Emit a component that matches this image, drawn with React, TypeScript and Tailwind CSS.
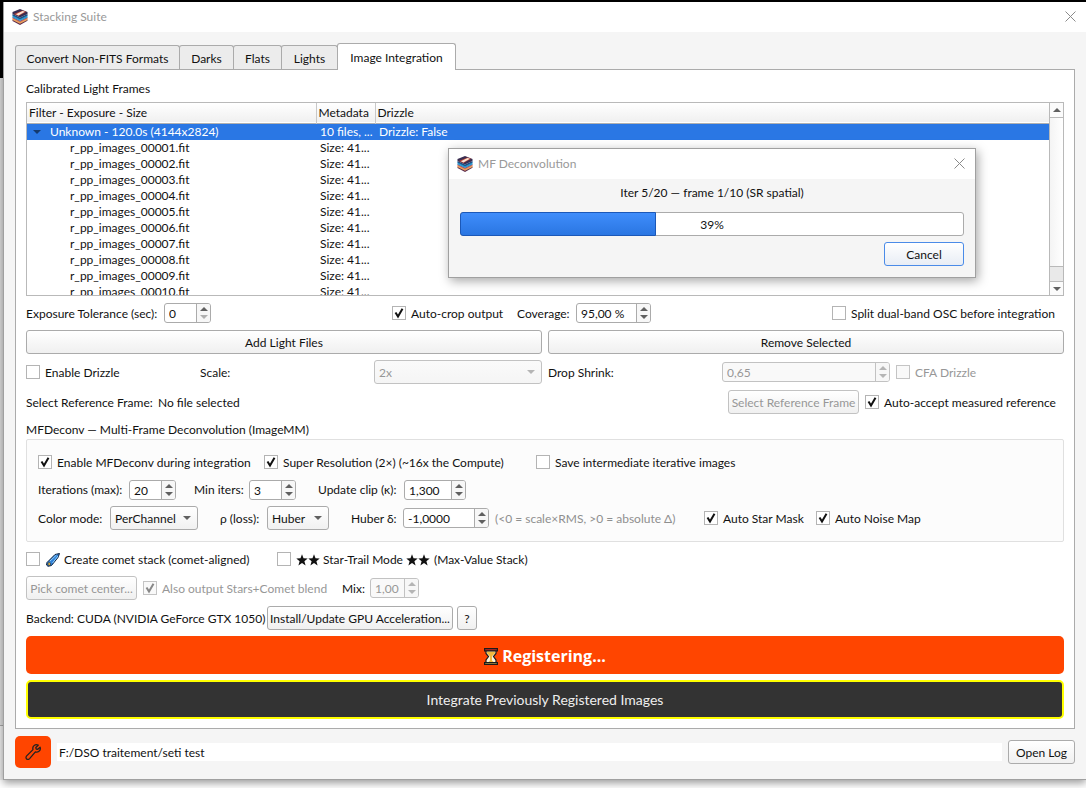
import { useState, type ReactNode } from 'react'
import clsx from 'clsx'

const TABS = ['Convert Non-FITS Formats', 'Darks', 'Flats', 'Lights', 'Image Integration']
const TAB_WIDTHS = ['w-[165px]', 'w-[55px]', 'w-[49px]', 'w-[57px]', 'w-[119px]']

const FRAMES = Array.from({ length: 10 }, (_, i) => `r_pp_images_${String(i + 1).padStart(5, '0')}.fit`)

function Logo() {
  return (
    <svg viewBox="0 0 16 16" className="size-4 shrink-0" aria-hidden="true">
      <path d="M0.5 10.5 8 14l7.5-3.5v1.2L8 16 0.5 12z" fill="#5a2a4e" />
      <path d="M0.5 9 8 12.6 15.5 9v2L8 14.8 0.5 11z" fill="#e8a25a" />
      <path d="M0.5 8 8 11.6 15.5 8v1.2L8 13 0.5 9.2z" fill="#b8475a" />
      <path d="M0.5 6 8 9.6 15.5 6v2.4L8 12 0.5 8.4z" fill="#2b9bd0" />
      <path d="M0.5 5 8 8.6 15.5 5v1.6L8 10.2 0.5 6.6z" fill="#1d4f86" />
      <path d="M8 0 15.5 3v2L8 8.6 0.5 5V3z" fill="#3a2d50" />
      <path d="M2 5 10.5 1.4l3.6 1.4L6.5 7z" fill="#c04a3a" />
      <path d="M4 5.2 10.6 2l2.2.8-6.4 3.6z" fill="#fbe4d5" />
    </svg>
  )
}

function CloseIcon() {
  return (
    <svg viewBox="0 0 11 11" className="size-[11px]" aria-hidden="true">
      <path d="M0.5 0.5l10 10M10.5 0.5l-10 10" stroke="#8a8a8a" fill="none" />
    </svg>
  )
}

function TitleBar({ title, className }: { title: string; className?: string }) {
  return (
    <header className={clsx('flex h-[30px] items-center gap-[5px] bg-white pl-2', className)}>
      <Logo />
      <h1 className="flex-1 text-[12px] text-[#999999]">{title}</h1>
      <button type="button" aria-label={`Close ${title}`} className="pb-0.5">
        <CloseIcon />
      </button>
    </header>
  )
}

function Triangle({ up, className }: { up?: boolean; className?: string }) {
  return (
    <svg viewBox="0 0 8 4" className={clsx('h-1 w-2', className)} aria-hidden="true">
      <path d={up ? 'M0 4 4 0l4 4z' : 'M0 0h8L4 4z'} fill="currentColor" />
    </svg>
  )
}

function Check({ children, checked, disabled, className }: {
  children: ReactNode
  checked?: boolean
  disabled?: boolean
  className?: string
}) {
  return (
    <label className={clsx('flex shrink-0 items-center gap-[5px] whitespace-nowrap', disabled && 'text-[#979797]', className)}>
      <span className="grid size-3.5 shrink-0">
        <input
          type="checkbox"
          defaultChecked={checked}
          disabled={disabled}
          className="peer col-start-1 row-start-1 size-3.5 appearance-none border border-[#b4b4b4] bg-white disabled:border-[#c4c4c4] disabled:bg-[#f9f9f9]"
        />
        <svg viewBox="0 0 14 14" className="invisible pointer-events-none col-start-1 row-start-1 size-3.5 peer-checked:visible" aria-hidden="true">
          <path d="M3.5 6.5 6 10.5 10.5 2.8" fill="none" stroke={disabled ? '#888888' : '#111111'} strokeWidth="2" />
        </svg>
      </span>
      <span className="flex items-center pt-0.5">{children}</span>
    </label>
  )
}

function Spin({ label, value, disabled, atMin, className }: {
  label: string
  value: string
  disabled?: boolean
  atMin?: boolean
  className: string
}) {
  return (
    <span className={clsx('flex h-5 shrink-0 overflow-hidden rounded-[3px] border', disabled ? 'border-[#c2c2c2] bg-[#f9f9f9] text-[#979797]' : 'border-[#ababab] bg-white', className)}>
      <input
        type="text"
        aria-label={label}
        defaultValue={value}
        disabled={disabled}
        className="w-full min-w-0 flex-1 bg-transparent pt-px pl-1 outline-none"
      />
      <span className={clsx('flex w-3.5 shrink-0 flex-col items-center justify-center gap-1 border-l bg-[#f7f7f7]', disabled ? 'border-[#c2c2c2] text-[#b5b5b5]' : 'border-[#ababab] text-[#606060]')}>
        <button type="button" disabled={disabled} aria-label={`Increase ${label}`} className="leading-none">
          <Triangle up />
        </button>
        <button type="button" disabled={disabled} aria-label={`Decrease ${label}`} className={clsx('leading-none', atMin && 'text-[#b0b0b0]')}>
          <Triangle />
        </button>
      </span>
    </span>
  )
}

function Combo({ label, options, disabled, className }: {
  label: string
  options: string[]
  disabled?: boolean
  className?: string
}) {
  return (
    <span className={clsx('grid h-6 shrink-0 items-center', className)}>
      <select
        aria-label={label}
        disabled={disabled}
        className="col-start-1 row-start-1 h-6 w-full appearance-none rounded-[3px] border border-[#ababab] bg-linear-to-b from-white to-[#f1f1f1] pt-0.5 pl-1 text-[#111111] opacity-100 disabled:border-[#c2c2c2] disabled:from-[#fafafa] disabled:to-[#f5f5f5] disabled:text-[#979797]"
      >
        {options.map(o => <option key={o}>{o}</option>)}
      </select>
      <Triangle className={clsx('pointer-events-none col-start-1 row-start-1 mr-[7px] justify-self-end', disabled ? 'text-[#b5b5b5]' : 'text-[#606060]')} />
    </span>
  )
}

function PushButton({ children, disabled, className }: { children: ReactNode; disabled?: boolean; className?: string }) {
  return (
    <button
      type="button"
      disabled={disabled}
      className={clsx(
        'h-6 shrink-0 rounded-[3px] border bg-linear-to-b from-white to-[#f0f0f0] pt-0.5 whitespace-nowrap',
        disabled ? 'border-[#c2c2c2] text-[#979797]' : 'border-[#ababab]',
        className,
      )}
    >
      {children}
    </button>
  )
}

function CometIcon() {
  return (
    <svg viewBox="0 0 14 14" className="mx-px mr-1 size-3.5" aria-hidden="true">
      <path d="M1 9.5 9 1.5 13.5 0.5 12 4.5 5.5 12.5 2 13.3 0.5 12z" fill="#2f7fd6" stroke="#10233f" />
      <path d="M4 8 10.5 2M6.5 10 12 3" stroke="#8fd0fb" fill="none" />
      <circle cx="3.2" cy="11" r="1.4" fill="#f3c54a" stroke="#10233f" strokeWidth="0.6" />
    </svg>
  )
}

function Stars() {
  return (
    <svg viewBox="0 0 24 12" className="h-3 w-6" aria-hidden="true">
      <path
        d="M6 0.3l1.5 4 4.2.2-3.3 2.7 1.2 4.2L6 9l-3.6 2.4 1.2-4.2L.3 4.500l4.200-.2zM18 0.3l1.500 4 4.200.2-3.300 2.700 1.200 4.200L18 9l-3.600 2.400 1.200-4.200-3.300-2.700 4.200-.2z"
        fill="#111111"
      />
    </svg>
  )
}

function HourglassIcon() {
  return (
    <svg viewBox="0 0 14 17" className="h-[17px] w-3.5" aria-hidden="true">
      <path d="M2 2.5h10v3l-2.500 3L12 12v3H2v-3l2.500-3.500L2 5.500z" fill="#fbf3dc" stroke="#1b1b1b" strokeWidth="1.2" />
      <path d="M3 3.5h8v1.800L8 8.300v4.200l2 2H4l2-2V8.300L3 5.300z" fill="#f0b93f" />
      <path d="M0.6 0.6h12.8v2.2H0.6z" fill="#c8282b" stroke="#1b1b1b" strokeWidth="1.2" />
      <path d="M0.6 14.6h12.8v1.8H0.6z" fill="#f3cf5c" stroke="#1b1b1b" strokeWidth="1.2" />
    </svg>
  )
}

function WrenchIcon() {
  return (
    <svg viewBox="0 0 16 16" className="size-4" aria-hidden="true">
      <path
        d="M13.2 1.2 10.8 3.4l.3 1.6 1.7.3 2.3-2.2c.6 2-.1 3.6-1.4 4.4-1.1.7-2.3.6-3.3.3L4.6 14.6c-.9 1-2.2 1-3 .3-.9-.8-.8-2.1.1-3L8 5.6C7.4 3.4 8.2 2 9.5 1.2c1.2-.7 2.5-.6 3.7 0z"
        fill="none"
        stroke="#222222"
        strokeWidth="1.3"
        strokeLinejoin="round"
      />
    </svg>
  )
}

function FrameTable() {
  return (
    <div className="flex h-[194px] border border-[#b9b9b9] bg-white">
      <div className="flex-1 overflow-hidden">
        <table className="w-full table-fixed border-collapse text-left leading-4 whitespace-nowrap">
          <thead>
            <tr className="h-5 border-b border-[#b0b0b0] bg-linear-to-b from-white to-[#f0f0f0]">
              <th className="w-[289px] border-r border-[#c8c8c8] pl-0.5 font-normal">Filter - Exposure - Size</th>
              <th className="w-[59px] border-r border-[#c8c8c8] pl-0.5 font-normal">Metadata</th>
              <th className="pl-0.5 font-normal">Drizzle</th>
            </tr>
          </thead>
          <tbody>
            <tr className="h-4 bg-[#2a77e4] text-white">
              <td>
                <span className="flex items-center gap-[9px] pl-1.5">
                  <Triangle className="text-[#143a6e]" />
                  Unknown - 120.0s (4144x2824)
                </span>
              </td>
              <td className="pl-1">10 files, ...</td>
              <td className="pl-1">Drizzle: False</td>
            </tr>
            {FRAMES.map(name => (
              <tr key={name} className="h-4">
                <td className="pl-[43px]">{name}</td>
                <td className="pl-1">Size: 41...</td>
                <td />
              </tr>
            ))}
          </tbody>
        </table>
      </div>
      <div className="flex w-3.5 flex-col border-l border-[#b9b9b9] bg-[#e9e9e9]">
        <button type="button" aria-label="Scroll up" className="flex h-3.5 items-center justify-center bg-[#fbfbfb] text-[#606060]">
          <Triangle up />
        </button>
        <div className="flex-1 border-y border-[#b9b9b9] bg-linear-to-r from-[#f4f4f4] to-white" />
        <div className="h-3.5" />
        <button type="button" aria-label="Scroll down" className="flex h-3.5 items-center justify-center border-t border-[#b9b9b9] bg-[#fbfbfb] text-[#606060]">
          <Triangle />
        </button>
      </div>
    </div>
  )
}

function DeconvolutionGroup() {
  return (
    <section>
      <h2 className="h-[19px] leading-5">MFDeconv — Multi-Frame Deconvolution (ImageMM)</h2>
      <div className="flex flex-col gap-1.5 rounded-xs border border-[#e0e0e0] bg-[#fcfcfc] px-[11px] py-[11px]">
        <div className="flex h-[23px] items-start pt-0.5">
          <Check checked className="w-[226px]">Enable MFDeconv during integration</Check>
          <Check checked className="w-[272px]">Super Resolution (2×) (~16x the Compute)</Check>
          <Check>Save intermediate iterative images</Check>
        </div>
        <div className="flex items-center whitespace-nowrap">
          <span className="w-[91px] shrink-0">Iterations (max):</span>
          <Spin label="Iterations" value="20" className="mr-[18px] w-[47px]" />
          <span className="w-[55px] shrink-0">Min iters:</span>
          <Spin label="Min iters" value="3" className="mr-[22px] w-[47px]" />
          <span className="w-[86px] shrink-0">Update clip (κ):</span>
          <Spin label="Update clip" value="1,300" className="w-[62px]" />
        </div>
        <div className="flex items-center whitespace-nowrap">
          <span className="w-[72px] shrink-0 pt-0.5">Color mode:</span>
          <Combo label="Color mode" options={['PerChannel', 'Luma']} className="mr-[22px] w-[88px]" />
          <span className="w-[47px] shrink-0 pt-0.5">ρ (loss):</span>
          <Combo label="Loss" options={['Huber', 'L2']} className="mr-[22px] w-[62px]" />
          <span className="w-[52px] shrink-0 pt-0.5">Huber δ:</span>
          <Spin label="Huber delta" value="-1,0000" className="mr-1.5 w-[86px]" />
          <span className="w-[209px] shrink-0 pt-0.5 text-[#8f8f8f]">{'(<0 = scale×RMS, >0 = absolute Δ)'}</span>
          <Check checked className="w-28">Auto Star Mask</Check>
          <Check checked>Auto Noise Map</Check>
        </div>
      </div>
    </section>
  )
}

function ProgressDialog({ onCancel }: { onCancel: () => void }) {
  const percent = 39
  return (
    <div role="dialog" aria-label="MF Deconvolution" className="absolute top-[148px] left-[448px] w-[528px] border border-[#a0a0a0] bg-[#f5f5f5] shadow-[2px_3px_10px_rgba(0,0,0,0.35)]">
      <TitleBar title="MF Deconvolution" className="pr-2.5" />
      <div className="flex flex-col px-[11px] pb-[11px]">
        <p className="h-[33px] pt-1 text-center leading-5">Iter 5/20 — frame 1/10 (SR spatial)</p>
        <div
          role="progressbar"
          aria-label="Deconvolution progress"
          aria-valuenow={percent}
          className="grid h-6 items-center rounded-[3px] border border-[#ababab] bg-white"
        >
          <div
            className="col-start-1 row-start-1 -my-px -ml-px h-6 rounded-l-[3px] border border-[#1b58b8] bg-linear-to-b from-[#3f8dfb] to-[#2a76e2]"
            style={{ width: `${percent}%` }}
          />
          <span className="col-start-1 row-start-1 pt-0.5 text-center">{percent}%</span>
        </div>
        <button
          type="button"
          onClick={onCancel}
          className="mt-1.5 h-6 w-20 self-end rounded-[3px] border border-[#4a8be8] bg-linear-to-b from-white to-[#e8edf5] pt-0.5"
        >
          Cancel
        </button>
      </div>
    </div>
  )
}

export default function App() {
  const [tab, setTab] = useState('Image Integration')
  const [running, setRunning] = useState(true)

  return (
    <div className="relative flex min-h-screen flex-col overflow-hidden bg-white pb-2 font-['Lato','Open_Sans',sans-serif] text-[12px] leading-4 text-[#111111]">
      <div className="h-0.5 bg-black" />
      <div className="flex flex-1">
        {/* sliver of the parent window behind this one */}
        <div className="flex w-[3px] flex-col">
          <div className="h-[76px] bg-black" />
          <div className="h-[648px] border-b border-[#a8a8a8] bg-[#dedede]" />
          <div className="flex-1 bg-[#ededed]" />
        </div>

        <div className="flex min-w-0 flex-1 flex-col border-b border-l border-[#a0a0a0] bg-[#f5f5f5] shadow-[0_3px_8px_rgba(0,0,0,0.4)]">
          <TitleBar title="Stacking Suite" className="pr-2.5" />

          <main className="flex flex-1 flex-col px-[11px] pt-[11px] pb-[11px]">
            <div role="tablist" className="flex items-end">
              {TABS.map((name, i) => (
                <button
                  key={name}
                  type="button"
                  role="tab"
                  aria-selected={tab === name}
                  onClick={() => setTab(name)}
                  className={clsx(
                    '-mr-px rounded-t-[3px] border border-b-0 border-[#ababab] whitespace-nowrap',
                    TAB_WIDTHS[i],
                    tab === name ? 'z-10 -mb-px h-[27px] bg-white pt-px' : 'h-6 bg-[#ececec] pt-0.5',
                  )}
                >
                  {name}
                </button>
              ))}
            </div>

            <div role="tabpanel" className="flex flex-1 flex-col gap-1.5 border border-[#ababab] bg-white px-2.5 pt-2.5 pb-[9px]">
              <h2 className="h-4 leading-[18px]">Calibrated Light Frames</h2>
              <FrameTable />

              <div className="flex h-[22px] items-center justify-between">
                <div className="flex items-center whitespace-nowrap">
                  <span className="w-[138px] pt-0.5">Exposure Tolerance (sec):</span>
                  <Spin label="Exposure tolerance" value="0" atMin className="w-[47px]" />
                </div>
                <div className="flex items-center whitespace-nowrap">
                  <Check checked className="w-[125px]">Auto-crop output</Check>
                  <span className="w-[59px] pt-0.5">Coverage:</span>
                  <Spin label="Coverage" value="95,00 %" className="w-[75px]" />
                </div>
                <Check className="w-[232px]">Split dual-band OSC before integration</Check>
              </div>

              <div className="grid grid-cols-2 gap-1.5">
                <PushButton>Add Light Files</PushButton>
                <PushButton>Remove Selected</PushButton>
              </div>

              <div className="grid grid-cols-6 items-center gap-1.5">
                <Check>Enable Drizzle</Check>
                <span className="pt-0.5">Scale:</span>
                <Combo label="Scale" options={['2x', '3x']} disabled />
                <span className="pt-0.5">Drop Shrink:</span>
                <Spin label="Drop shrink" value="0,65" disabled className="w-full" />
                <Check disabled>CFA Drizzle</Check>
              </div>

              <div className="flex items-center gap-1.5 whitespace-nowrap">
                <span className="w-[126px] pt-0.5">Select Reference Frame:</span>
                <span className="flex-1 pt-0.5">No file selected</span>
                <PushButton disabled className="w-[131px]">Select Reference Frame</PushButton>
                <Check checked className="w-[199px]">Auto-accept measured reference</Check>
              </div>

              <DeconvolutionGroup />

              <div className="flex h-[22px] items-center">
                <Check className="w-[251px]">
                  <CometIcon />
                  Create comet stack (comet-aligned)
                </Check>
                <Check>
                  <Stars />
                  <span className="px-[3px]">Star-Trail Mode</span>
                  <Stars />
                  <span className="pl-1">(Max-Value Stack)</span>
                </Check>
              </div>

              <div className="flex items-center gap-1.5 whitespace-nowrap">
                <PushButton disabled className="w-[111px]">Pick comet center...</PushButton>
                <Check checked disabled className="w-[193px]">Also output Stars+Comet blend</Check>
                <span className="w-[22px] pt-0.5">Mix:</span>
                <Spin label="Mix" value="1,00" disabled className="w-[49px]" />
              </div>

              <div className="flex items-center gap-1 whitespace-nowrap">
                <span className="w-[237px] pt-0.5">Backend: CUDA (NVIDIA GeForce GTX 1050)</span>
                <PushButton className="w-[186px]">Install/Update GPU Acceleration...</PushButton>
                <PushButton className="w-5">?</PushButton>
              </div>

              <button type="button" className="flex h-[38px] items-center justify-center gap-1 rounded-[5px] bg-[#ff4500] pt-0.5 font-['Open_Sans',sans-serif] text-[16px] font-bold text-white">
                <HourglassIcon />
                Registering...
              </button>
              <button type="button" className="h-[39px] rounded-[5px] border-2 border-[#ffff00] bg-[#333333] text-[14px] text-[#eeeeee]">
                Integrate Previously Registered Images
              </button>
            </div>

            <footer className="mt-[7px] flex items-center gap-1.5">
              <button type="button" aria-label="Settings" className="flex h-8 w-9 items-center justify-center rounded-[5px] bg-[#ff4500]">
                <WrenchIcon />
              </button>
              <input type="text" aria-label="Stacking directory" defaultValue="F:/DSO traitement/seti test" className="h-[18px] flex-1 bg-white pl-0.5 outline-none" />
              <PushButton className="w-[67px]">Open Log</PushButton>
            </footer>
          </main>
        </div>
      </div>

      {running && <ProgressDialog onCancel={() => setRunning(false)} />}
    </div>
  )
}
